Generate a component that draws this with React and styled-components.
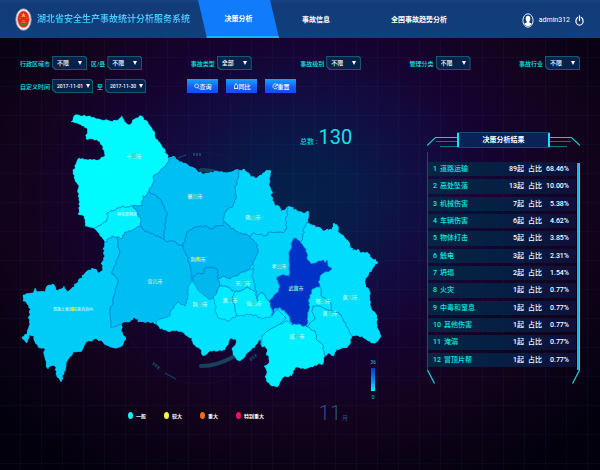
import React from "react";
import styled, { createGlobalStyle } from "styled-components";

const FONT = 'Roboto, "Noto Sans CJK SC", sans-serif';

const GlobalStyle = createGlobalStyle`
  *, *::before, *::after { box-sizing: border-box; }
  body {
    margin: 0;
    background: #04000f;
    font-family: ${FONT};
    color: #fff;
  }
  button, select { font-family: inherit; }
`;

const Page = styled.div`
  min-height: 100vh;
  display: flex;
  flex-direction: column;
  background:
    repeating-linear-gradient(90deg, transparent 0 20px, rgba(40, 110, 170, 0.07) 20px 21px),
    repeating-linear-gradient(180deg, transparent 0 28px, rgba(40, 110, 170, 0.07) 28px 29px),
    radial-gradient(ellipse 64% 66% at 50% 42%, #04214b 0%, #081a49 16%, #120d42 32%, #160230 52%, #13031d 72%, #0c0216 86%, #03000e 104%);
`;

/* ---------- header ---------- */

const Header = styled.header`
  display: grid;
  grid-template-columns: 198px 1fr 115px;
  height: 38px;
  background: linear-gradient(#17447f, #113b79 12%, #123f7c);
`;

const Brand = styled.div`
  display: flex;
  align-items: center;
  gap: 5px;
  padding-left: 15px;
`;

const Title = styled.h1`
  margin: 0;
  font-size: 9px;
  line-height: 14px;
  font-weight: 700;
  white-space: nowrap;
  color: transparent;
  background: linear-gradient(#5ce2ff, #2a9be8);
  background-clip: text;
`;

const Nav = styled.nav`
  display: grid;
  grid-template-columns: 81fr 74fr 132fr;
`;

const Tab = styled.a`
  display: flex;
  align-items: center;
  justify-content: center;
  font-size: 7px;
  font-weight: 700;
  color: #fff;
  text-decoration: none;
  border-bottom: ${(p) => (p.$active ? "2px solid #12b4fb" : "0")};
  background: ${(p) => (p.$active ? "#107cfc" : "none")};
  clip-path: ${(p) => (p.$active ? "polygon(0 0, 89% 0, 100% 100%, 11% 100%)" : "none")};
`;

const Account = styled.div`
  display: flex;
  align-items: center;
  justify-content: flex-end;
  gap: 5px;
  padding: 2px 16px 0 0;
  font-size: 7px;
`;

const IconButton = styled.button`
  display: flex;
  padding: 0;
  border: 0;
  background: none;
  color: #fff;
`;

/* ---------- filters ---------- */

const Filters = styled.form`
  display: flex;
  flex-direction: column;
  gap: 9px;
  padding: 18px 20px 0;
`;

const FilterRow = styled.div`
  display: flex;
  justify-content: ${(p) => (p.$spread ? "space-between" : "flex-start")};
  gap: ${(p) => (p.$spread ? 0 : 41)}px;
`;

const FilterGroup = styled.div`
  display: flex;
  gap: 4px;
`;

const Field = styled.label`
  display: flex;
  align-items: center;
  gap: 2px;
  font-size: 6px;
  font-weight: 500;
  white-space: nowrap;
  color: #12e8e2;
`;

const SelectBox = styled.span`
  display: grid;
  align-items: center;
  width: ${(p) => (p.$wide ? 41 : 35)}px;
  height: 14px;
  padding: 1px;
  background: #16596f;
  clip-path: polygon(0 0, calc(100% - 2px) 0, 100% 2px, 100% 100%, 3px 100%, 0 calc(100% - 3px));
`;

const Select = styled.select`
  grid-area: 1 / 1;
  width: 100%;
  height: 12px;
  padding: 0 0 0 4px;
  border: 0;
  appearance: none;
  background: #06214c;
  color: #fff;
  font-size: ${(p) => (p.$wide ? 5 : 6)}px;
  font-weight: 500;
  line-height: 12px;
  clip-path: polygon(0 0, calc(100% - 2px) 0, 100% 2px, 100% 100%, 3px 100%, 0 calc(100% - 3px));
`;

const Caret = styled.svg`
  grid-area: 1 / 1;
  z-index: 1;
  justify-self: end;
  width: 4px;
  height: 4px;
  margin-right: ${(p) => (p.$wide ? 2 : 4)}px;
  pointer-events: none;
`;

const Actions = styled.div`
  display: flex;
  gap: 8px;
`;

const ActionButton = styled.button`
  display: flex;
  align-items: center;
  justify-content: center;
  width: 31px;
  height: 14px;
  padding: 0;
  border: 0;
  font-size: 6px;
  font-weight: 500;
  color: #fff;
  background: linear-gradient(#16a4fb, #1560fa 55%, #1848f4);
`;

/* ---------- map ---------- */

const Main = styled.main`
  display: grid;
  grid-template-columns: minmax(0, 1fr) 153px;
  align-items: start;
  gap: 27px;
  padding: 16px 20px 0 0;
`;

const MapColumn = styled.section`
  display: flex;
  flex-direction: column;
`;

const Stage = styled.div`
  position: relative;
`;

const MapSvg = styled.svg`
  display: block;
  width: 100%;
  height: auto;
`;

const MapLabel = styled.text`
  font-size: ${(p) => (p.$long ? 4 : 5)}px;
  fill: #eaffff;
  text-anchor: middle;
`;

const Total = styled.p`
  position: absolute;
  top: 5%;
  left: 75%;
  margin: 0;
  display: flex;
  align-items: baseline;
  gap: 1px;
  font-size: 7px;
  line-height: 26px;
  color: #12e2ec;
`;

const TotalNumber = styled.strong`
  font-size: 20px;
  font-weight: 400;
  line-height: 26px;
`;

const Scale = styled.div`
  position: absolute;
  right: 6%;
  bottom: -1px;
  display: flex;
  flex-direction: column;
  align-items: center;
  gap: 3px;
  font-size: 5px;
  line-height: 6px;
  color: #12c8d8;
`;

const ScaleBar = styled.div`
  width: 4px;
  height: 23px;
  background: linear-gradient(#0b38cc, #0090f0 55%, #00f6ff);
`;

const MapFooter = styled.div`
  display: flex;
  align-items: center;
  justify-content: space-between;
  padding: 2px 13% 0 32%;
`;

const Legend = styled.ul`
  display: grid;
  grid-auto-flow: column;
  grid-auto-columns: 36px;
  margin: 0;
  padding: 0;
  list-style: none;
`;

const LegendItem = styled.li`
  display: flex;
  align-items: center;
  gap: 3px;
  font-size: 5px;
  font-weight: 700;
  white-space: nowrap;
`;

const LegendDot = styled.span`
  flex: none;
  width: 5px;
  height: 7px;
  border-radius: 50%;
  background: ${(p) => p.$color};
`;

const Month = styled.p`
  margin: 0;
  display: flex;
  align-items: baseline;
  gap: 1px;
  font-size: 6px;
  line-height: 24px;
  color: #1f5596;
`;

const MonthNumber = styled.span`
  font-size: 20px;
  font-weight: 300;
  line-height: 24px;
`;

/* ---------- result panel ---------- */

const Panel = styled.section`
  margin-top: 23px;
`;

const PanelHead = styled.div`
  display: grid;
  grid-template-columns: 30px 1fr 30px;
`;

const Wing = styled.svg`
  width: 30px;
  height: 16px;
  transform: ${(p) => (p.$flip ? "scaleX(-1)" : "none")};
`;

const PanelTitle = styled.h2`
  margin: 0;
  font-size: 7px;
  line-height: 14px;
  text-align: center;
  background: #0b2259;
  border: solid #124a72;
  border-width: 1px 0;
  box-shadow: inset 2px 0 #17e3ee, inset -2px 0 #17e3ee;
`;

const PanelBody = styled.div`
  display: grid;
  grid-template-columns: minmax(0, 1fr) 3px;
  gap: 1px;
  margin-top: 4px;
  padding-top: 7px;
  border-left: 1px solid #125566;
`;

const Results = styled.table`
  width: 100%;
  height: 211px;
  border-collapse: separate;
  border-spacing: 0 3px;
  font-size: 7px;
  line-height: 12px;
`;

const ResultRow = styled.tr`
  background: linear-gradient(90deg, #042543, #061f44 50%, #0f0f38);
`;

const Name = styled.th`
  padding: 0 0 0 5px;
  text-align: left;
  font-weight: 500;
  color: #12e8e2;
`;

const Rank = styled.span`
  margin-right: 3px;
`;

const Value = styled.td`
  width: ${(p) => p.$w}px;
  padding: 0 ${(p) => p.$end || 0}px 0 0;
  text-align: right;
  font-weight: 500;
  white-space: nowrap;
`;

const Thumb = styled.div`
  margin-top: 4px;
  background: #10b9e4;
  border-right: 1px solid #1ad9ec;
`;

const PanelFoot = styled.svg`
  display: block;
  width: 100%;
  height: 14px;
`;

/* ---------- data ---------- */

const OUTLINE =
  "71,123 74,117 79,116 88,117 97,120 102,121 110,122 118,121 122,117 126,124 129,126 136,119 142,117 144,121 148,123 151,128 154,132 155,138 158,142 162,147 167,155 169,160 173,157 178,161 183,164 192,168 197,172 204,175 211,173 220,173 227,174 235,171 239,171 241,173 244,170 250,176 255,179 262,176 267,171 270,171 270,178 269,185 272,192 271,197 274,203 275,207 279,207 281,213 287,208 291,208 297,212 303,214 308,212 309,217 307,224 312,226 318,228 323,232 327,230 332,231 334,224 338,227 338,233 343,236 346,240 350,246 353,252 358,250 361,254 367,253 372,259 378,263 372,270 368,277 365,282 366,288 370,293 370,305 373,312 377,317 377,328 381,337 378,342 373,344 368,342 362,337 352,337 350,345 345,349 340,350 336,350 334,357 328,354 325,357 323,365 318,365 313,368 305,370 297,368 293,372 292,377 285,377 280,383 277,388 272,387 267,383 265,378 267,373 264,367 268,365 269,358 266,356 267,350 265,347 262,348 261,343 262,337 257,345 250,352 245,358 240,362 235,358 233,356 232,349 236,344 235,340 230,340 227,347 225,351 218,352 210,352 203,357 200,350 193,345 192,339 187,337 182,333 175,332 167,332 160,330 153,323 138,323 138,320 133,319 130,323 122,324 121,332 126,340 122,347 114,349 110,348 103,343 97,340 88,342 85,345 82,352 73,353 69,359 66,365 64,373 61,383 57,378 55,367 51,367 48,370 46,368 45,360 44,349 38,348 35,343 34,337 29,336 27,344 22,338 27,335 29,327 29,317 31,310 27,305 23,302 23,296 33,294 35,289 37,293 45,293 47,287 53,285 56,291 61,290 64,287 67,293 71,290 78,283 85,274 92,269 96,270 99,274 102,272 102,263 105,257 103,250 105,243 100,237 95,230 85,227 84,217 78,215 80,207 78,197 79,187 75,182 73,173 76,165 79,159 88,161 98,161 105,157 103,148 100,143 93,140 86,140 87,129 82,127 77,124";

const REGIONS = [
  { fill: "#00fbff", points: "50,105 165,105 180,150 169,160 165,168 153,178 154,183 148,193 146,197 143,197 142,207 138,207 133,207 127,208 122,207 113,212 107,214 107,222 98,227 94,230 50,235" },
  { fill: "#00ccf8", points: "105,243 112,237 117,238 118,247 120,253 116,263 112,275 116,278 118,283 113,303 110,312 111,329 118,326 122,324 145,345 110,400 10,400 10,240" },
  { fill: "#00f2ff", points: "94,230 98,227 107,222 107,214 113,212 122,207 127,208 133,207 138,215 141,223 141,227 135,230 130,232 125,233 121,240 117,238 112,237 105,243 85,250" },
  { fill: "#00bdf2", points: "117,238 121,240 125,233 130,232 135,230 141,227 145,233 152,234 156,237 163,240 167,243 173,242 177,245 183,247 187,257 190,267 192,280 191,284 187,293 188,300 185,307 178,303 172,310 168,318 158,321 155,325 150,340 122,324 118,326 111,329 110,312 113,303 118,283 116,278 112,275 116,263 120,253 118,247" },
  { fill: "#00bff3", points: "169,160 200,150 240,160 239,172 238,180 235,188 236,200 233,207 225,213 223,220 223,227 217,227 212,230 207,227 197,228 190,231 187,233 183,247 177,245 173,242 167,243 163,240 165,227 167,215 162,203 157,197 148,193 154,183 153,178 165,168" },
  { fill: "#00bbf0", points: "148,193 157,197 162,203 167,215 165,227 163,240 156,237 152,234 145,233 141,227 141,223 138,215 133,207 138,207 142,207 143,197 146,197" },
  { fill: "#00d6fb", points: "239,172 240,160 300,160 287,208 287,213 286,222 287,230 283,234 270,233 265,237 253,234 250,238 245,235 238,233 230,228 225,223 223,220 225,213 233,207 236,200 235,188 238,180" },
  { fill: "#00b8ef", points: "183,247 187,233 190,231 197,228 207,227 212,230 217,227 223,227 225,223 230,228 238,233 245,235 250,238 257,245 258,252 253,263 250,269 243,273 237,277 230,280 223,277 218,280 217,270 210,268 205,269 203,275 197,275 193,278 192,280 190,267 187,257" },
  { fill: "#00b7ee", points: "192,280 193,278 197,275 203,275 205,269 210,268 217,270 218,280 220,287 217,293 213,299 208,300 203,295 197,290" },
  { fill: "#00dcfa", points: "218,280 223,277 230,280 237,277 243,273 253,269 252,278 255,285 256,294 248,288 240,292 235,293 225,287 220,287" },
  { fill: "#00d3fa", points: "250,238 253,234 265,237 270,233 283,234 287,230 286,222 287,213 287,200 315,205 307,224 305,228 303,237 301,242 295,290 272,317 269,302 265,297 262,293 258,297 256,303 256,294 255,285 252,278 253,269 253,263 258,252 257,245" },
  { fill: "#00ddfd", points: "301,242 303,237 305,228 307,224 320,210 400,220 400,360 352,337 347,328 343,320 338,313 332,312 330,303 322,298 320,287 315,287 300,290" },
  { fill: "#00e6ff", points: "315,287 320,287 322,298 330,303 332,312 320,307 313,307 312,313 315,320 310,324 306,328 300,300" },
  { fill: "#00e4ff", points: "313,307 320,307 332,312 338,313 343,320 347,328 352,337 355,365 325,362 324,353 322,345 316,340 315,332 307,328 310,324 315,320 312,313" },
  { fill: "#00ebff", points: "220,287 225,287 235,293 232,298 235,307 236,317 227,322 223,320 218,319 215,312 215,305 213,299 217,293" },
  { fill: "#00ecff", points: "235,293 240,292 248,288 256,294 257,303 258,297 262,293 265,297 269,302 272,310 272,317 262,320 255,316 245,316 236,317 235,307 232,298" },
  { fill: "#00efff", points: "262,337 267,332 280,325 286,322 292,326 298,325 307,328 315,332 316,340 322,345 324,353 330,370 270,400 250,390 262,345" },
  { fill: "#0032c8", points: "292,243 295,239 300,242 302,245 306,250 307,260 311,265 318,262 323,261 325,264 327,261 329,268 332,270 322,275 318,283 320,287 312,290 309,300 309,310 307,320 307,328 298,325 292,326 290,320 285,313 280,308 275,309 272,317 273,312 269,302 278,293 280,288 277,278 282,276 289,277 289,255" },
];

const CITIES = [
  ["十堰市", 134, 157],
  ["襄阳市", 195, 197],
  ["随州市", 253, 218],
  ["神农架林区", 127, 215, null],
  ["荆门市", 198, 260, "#f6e21c"],
  ["宜昌市", 155, 282],
  ["孝感市", 279, 267],
  ["武汉市", 296, 289],
  ["天门市", 243, 284],
  ["潜江市", 230, 301],
  ["仙桃市", 254, 304],
  ["荆州市", 200, 305],
  ["鄂州市", 323, 302],
  ["黄石市", 330, 314],
  ["黄冈市", 350, 298],
  ["咸宁市", 297, 337],
  ["恩施土家族苗族自治州", 73, 310, "#f6e21c"],
];

const RESULTS = [
  ["道路运输", 89, "68.46%"],
  ["高处坠落", 13, "10.00%"],
  ["机械伤害", 7, "5.38%"],
  ["车辆伤害", 6, "4.62%"],
  ["物体打击", 5, "3.85%"],
  ["触电", 3, "2.31%"],
  ["坍塌", 2, "1.54%"],
  ["火灾", 1, "0.77%"],
  ["中毒和窒息", 1, "0.77%"],
  ["其他伤害", 1, "0.77%"],
  ["淹溺", 1, "0.77%"],
  ["冒顶片帮", 1, "0.77%"],
];

const LEGEND = [
  ["一般", "#12f0f4"],
  ["较大", "#fbf63c"],
  ["重大", "#f96a12"],
  ["特别重大", "#f80a5c"],
];

/* Adds small bends to every border segment. The bend depends only on the
   segment's own ends, so neighbouring regions keep a common border. */
function roughen(source) {
  const pts = source.split(" ").map((p) => p.split(",").map(Number));
  const out = [];
  pts.forEach((a, i) => {
    const b = pts[(i + 1) % pts.length];
    const [p, q] = a[0] < b[0] || (a[0] === b[0] && a[1] < b[1]) ? [a, b] : [b, a];
    const dx = q[0] - p[0];
    const dy = q[1] - p[1];
    const len = Math.hypot(dx, dy) || 1;
    const count = Math.min(6, Math.max(2, Math.round(len / 2)));
    const bends = [];
    for (let k = 1; k < count; k += 1) {
      const seed = Math.sin(p[0] * 12.9 + p[1] * 78.2 + q[0] * 37.7 + q[1] * 9.1 + k * 51.3) * 43758.5;
      const shift = (seed - Math.floor(seed) - 0.5) * 2;
      const t = k / count;
      bends.push([p[0] + dx * t - (dy / len) * shift, p[1] + dy * t + (dx / len) * shift]);
    }
    if (p !== a) bends.reverse();
    out.push(a, ...bends);
  });
  return out.map(([x, y]) => `${x.toFixed(1)},${y.toFixed(1)}`).join(" ");
}

/* ---------- parts ---------- */

function Emblem() {
  return (
    <svg width="17" height="23" viewBox="0 0 17 23" aria-hidden="true">
      <ellipse cx="8.5" cy="11.5" rx="7.7" ry="10.8" fill="#ece9e4" stroke="#8d98aa" strokeWidth="0.8" />
      <ellipse cx="8.5" cy="11.3" rx="5.8" ry="8.3" fill="#ef1f1c" stroke="#b98b78" strokeWidth="0.6" />
      <path d="M8.5 4.6l.7 1.8h1.6l-1.3 1.2.5 1.8-1.5-1.1L7 9.4l.5-1.8-1.3-1.2h1.6z" fill="#ffd41f" />
      <path d="M4.6 10.2l1.2.6M12.4 10.2l-1.2.6M5.6 8l.6.8M11.4 8l-.6.8" stroke="#ffb020" strokeWidth="0.7" />
      <path d="M4.2 13.4q1.2 4.4 4.3 4.4t4.3-4.4l-1.5 1.2v1.5l-1.5-.5-1.3.9-1.3-.9-1.5.5v-1.5z" fill="#3c8a35" />
      <path d="M6.4 14.3h4.2M7.2 12.6h2.6" stroke="#e5a31e" strokeWidth="0.8" />
    </svg>
  );
}

function UserIcon() {
  return (
    <svg width="12" height="15" viewBox="0 0 12 15" aria-hidden="true">
      <ellipse cx="6" cy="7.5" rx="5.1" ry="6.7" fill="none" stroke="#fff" strokeWidth="0.9" />
      <path d="M6 2.8c1.6 0 2.4 1.2 2.3 2.9-.1 1.4-.6 2.1-1 2.7v1l2.4 1.2c-.8 1.7-2.1 2.7-3.7 2.7s-2.9-1-3.7-2.7l2.4-1.2v-1c-.4-.6-.9-1.3-1-2.7C3.6 4 4.4 2.8 6 2.8z" fill="#fff" />
    </svg>
  );
}

function PowerIcon() {
  return (
    <svg width="9" height="11" viewBox="0 0 9 11" fill="none" stroke="#fff" strokeWidth="1.2" strokeLinecap="round" aria-hidden="true">
      <path d="M2.6 2.4C1.4 3.2.9 4.5.9 5.9c0 2.4 1.6 4.3 3.6 4.3s3.6-1.9 3.6-4.3c0-1.4-.5-2.7-1.7-3.5" />
      <path d="M4.5.8v4.7" />
    </svg>
  );
}

const ACTION_ICONS = {
  search: <path d="M2.6 1a1.9 1.9 0 1 0 .01 0M4 4.3L5.5 6" />,
  compare: <path d="M1 5.5h4.2M1.6 5.3V3.1c0-2.6 3-2.6 3 0v2.2M3.1 1.1V.4" />,
  reset: <path d="M5.3 2.2A2.3 2.5 0 1 0 5.4 4.3M5.5.8v1.6H4M3.1 2.4v1.3h1" />,
};

function ActionIcon({ name }) {
  return (
    <svg width="6" height="7" viewBox="0 0 6 7" fill="none" stroke="#fff" strokeWidth="0.8" aria-hidden="true">
      {ACTION_ICONS[name]}
    </svg>
  );
}

function Filter({ label, value, wide }) {
  return (
    <Field>
      {label}
      <SelectBox $wide={wide}>
        <Select $wide={wide} defaultValue={value}>
          <option>{value}</option>
        </Select>
        <Caret $wide={wide} viewBox="0 0 4 4" aria-hidden="true">
          <path d="M0 0h4L2 4z" fill="#fff" />
        </Caret>
      </SelectBox>
    </Field>
  );
}

function ProvinceMap() {
  const outline = roughen(OUTLINE);
  return (
    <MapSvg viewBox="0 110 400 290" role="img" aria-label="湖北省">
      <defs>
        <clipPath id="province">
          <polygon points={outline} />
        </clipPath>
      </defs>
      <g fill="none" stroke="#1b6a7c">
        <ellipse cx="200" cy="269" rx="88" ry="116" stroke="#123a66" strokeWidth="0.6" opacity="0.3" />
        <path d="M201 171q12 0 24 5" strokeWidth="4" strokeLinecap="round" opacity="0.5" />
        <path d="M201 367q16 0 32-9" strokeWidth="4" strokeLinecap="round" opacity="0.6" />
        <path d="M178 159l8-3M165 374l11 6" strokeWidth="1" opacity="0.7" />
        <path d="M193 155.5h9M153 364l7 6M250 361l7-6" strokeWidth="3" strokeDasharray="2 1" opacity="0.6" />
      </g>
      <polygon points={outline} fill="#00e2ff" />
      <g clipPath="url(#province)" stroke="#0875cf" strokeWidth="0.6" strokeLinejoin="round">
        {REGIONS.map((r) => (
          <polygon key={r.points} points={roughen(r.points)} fill={r.fill} />
        ))}
        <path d="M272 317l5-7 9 9-6 6-13 7-5 5" fill="#00e2ff" />
      </g>
      <polygon points={outline} fill="none" stroke="#06b4f0" strokeWidth="0.4" />
      {CITIES.map(([name, x, y, dot = "#19dfd2"]) => (
        <g key={name}>
          <MapLabel x={x} y={y + 2} $long={name.length > 4}>{name}</MapLabel>
          {dot && <ellipse cx={x} cy={y} rx="2" ry="2.5" fill={dot} fillOpacity="0.8" stroke="#3bb8a8" strokeWidth="0.4" />}
        </g>
      ))}
    </MapSvg>
  );
}

function PanelWing({ flip }) {
  return (
    <Wing $flip={flip} viewBox="0 0 30 16" fill="none" aria-hidden="true">
      <path d="M0 13.5L8.5 5.5H30" stroke="#17cbd2" strokeWidth="1.2" />
      <path d="M9 9.5H30M13 14.5H30" stroke="#127784" strokeWidth="1.2" />
    </Wing>
  );
}

export default function App() {
  return (
    <Page>
      <GlobalStyle />
      <Header>
        <Brand>
          <Emblem />
          <Title>湖北省安全生产事故统计分析服务系统</Title>
        </Brand>
        <Nav>
          <Tab href="#analysis" $active>决策分析</Tab>
          <Tab href="#accidents">事故信息</Tab>
          <Tab href="#trends">全国事故趋势分析</Tab>
        </Nav>
        <Account>
          <UserIcon />
          <span>admin312</span>
          <IconButton type="button" aria-label="退出">
            <PowerIcon />
          </IconButton>
        </Account>
      </Header>

      <Filters>
        <FilterRow $spread>
          <FilterGroup>
            <Filter label="行政区域市" value="不限" />
            <Filter label="区/县" value="不限" />
          </FilterGroup>
          <Filter label="事故类型" value="全部" />
          <Filter label="事故级别" value="不限" />
          <Filter label="管理分类" value="不限" />
          <Filter label="事故行业" value="不限" />
        </FilterRow>
        <FilterRow>
          <FilterGroup>
            <Filter label="自定义时间" value="2017-11-01" wide />
            <Filter label="至" value="2017-11-30" wide />
          </FilterGroup>
          <Actions>
            <ActionButton type="button"><ActionIcon name="search" />查询</ActionButton>
            <ActionButton type="button"><ActionIcon name="compare" />同比</ActionButton>
            <ActionButton type="button"><ActionIcon name="reset" />重置</ActionButton>
          </Actions>
        </FilterRow>
      </Filters>

      <Main>
        <MapColumn>
          <Stage>
            <ProvinceMap />
            <Total>
              总数 : <TotalNumber>130</TotalNumber>
            </Total>
            <Scale>
              <span>36</span>
              <ScaleBar />
              <span>0</span>
            </Scale>
          </Stage>
          <MapFooter>
            <Legend>
              {LEGEND.map(([name, color]) => (
                <LegendItem key={name}>
                  <LegendDot $color={color} />
                  {name}
                </LegendItem>
              ))}
            </Legend>
            <Month>
              <MonthNumber>11</MonthNumber>月
            </Month>
          </MapFooter>
        </MapColumn>

        <Panel>
          <PanelHead>
            <PanelWing />
            <PanelTitle>决策分析结果</PanelTitle>
            <PanelWing flip />
          </PanelHead>
          <PanelBody>
            <Results>
              <tbody>
                {RESULTS.map(([name, count, share], i) => (
                  <ResultRow key={name}>
                    <Name scope="row">
                      <Rank>{i + 1}</Rank>
                      {name}
                    </Name>
                    <Value $w={24}>{count}起</Value>
                    <Value $w={18}>占比</Value>
                    <Value $w={34} $end={7}>{share}</Value>
                  </ResultRow>
                ))}
              </tbody>
            </Results>
            <Thumb />
          </PanelBody>
          <PanelFoot viewBox="0 0 153 14" preserveAspectRatio="none" fill="none" stroke="#17cbd2" strokeWidth="1.3" aria-hidden="true">
            <path d="M.5 0l7 13.5M152.5 0l-7 13.5" />
          </PanelFoot>
        </Panel>
      </Main>
    </Page>
  );
}
